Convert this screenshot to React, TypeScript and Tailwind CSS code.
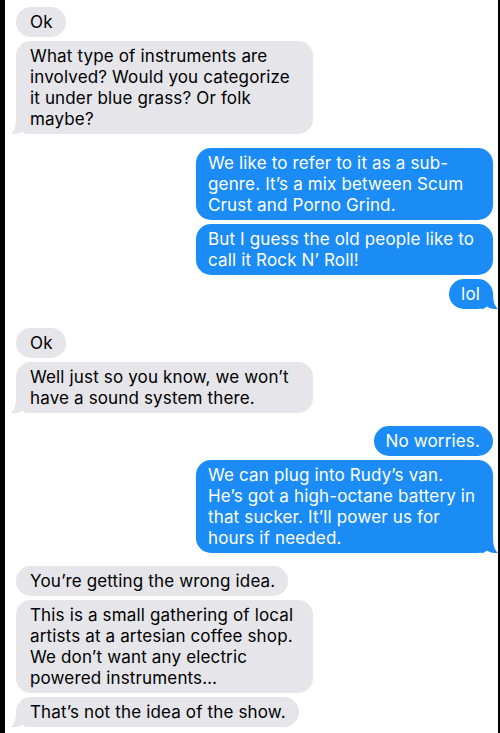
import type { ReactNode } from 'react'

type Msg = { lines: string[]; wide?: boolean }
type Group = { me: boolean; top: string; msgs: Msg[] }

const GROUPS: Group[] = [
  {
    me: false,
    top: 'mt-[7px]',
    msgs: [
      { lines: ['Ok'] },
      {
        lines: [
          'What type of instruments are',
          'involved? Would you categorize',
          'it under blue grass? Or folk',
          'maybe?',
        ],
        wide: true,
      },
    ],
  },
  {
    me: true,
    top: 'mt-[14px]',
    msgs: [
      {
        lines: ['We like to refer to it as a sub-', 'genre. It\u2019s a mix between Scum', 'Crust and Porno Grind.'],
        wide: true,
      },
      { lines: ['But I guess the old people like to', 'call it Rock N\u2019 Roll!'], wide: true },
      { lines: ['lol'] },
    ],
  },
  {
    me: false,
    top: 'mt-[19px]',
    msgs: [
      { lines: ['Ok'] },
      { lines: ['Well just so you know, we won\u2019t', 'have a sound system there.'], wide: true },
    ],
  },
  {
    me: true,
    top: 'mt-[13px]',
    msgs: [
      { lines: ['No worries.'] },
      {
        lines: [
          'We can plug into Rudy\u2019s van.',
          'He\u2019s got a high-octane battery in',
          'that sucker. It\u2019ll power us for',
          'hours if needed.',
        ],
        wide: true,
      },
    ],
  },
  {
    me: false,
    top: 'mt-[13px]',
    msgs: [
      { lines: ['You\u2019re getting the wrong idea.'] },
      {
        lines: [
          'This is a small gathering of local',
          'artists at a artesian coffee shop.',
          'We don\u2019t want any electric',
          'powered instruments\u2026',
        ],
        wide: true,
      },
      { lines: ['That\u2019s not the idea of the show.'] },
    ],
  },
]

function Tail({ me }: { me: boolean }) {
  return (
    <svg
      viewBox="0 0 17 16"
      className={`absolute bottom-0 h-[16px] w-[17px] ${
        me ? '-right-[5px] fill-[#1b8cf5]' : '-left-[5px] -scale-x-100 fill-[#e5e5ea]'
      }`}
    >
      <path d="M0 0 L12 0 C12 8 13.5 13 17 16 C12.5 16.4 8.5 15.2 6 13.4 C4 15 2 16 0 16 Z" />
    </svg>
  )
}

function Bubble({ me, msg, tail }: { me: boolean; msg: Msg; tail: boolean }) {
  const lines: ReactNode[] = []
  msg.lines.forEach((l, i) => {
    if (i) lines.push(<br key={`b${i}`} />)
    lines.push(l)
  })
  return (
    <div
      className={`relative rounded-[15px] pb-[4px] pt-[5px] text-[17px] leading-[21px] tracking-[0.15px] whitespace-nowrap ${
        msg.wide ? 'w-[297px]' : 'w-fit'
      } ${
        me
          ? 'self-end bg-[#1b8cf5] pl-[12px] pr-[13px] text-white'
          : 'self-start bg-[#e5e5ea] pl-[14px] pr-[13px] text-black'
      }`}
    >
      {tail && <Tail me={me} />}
      <span className="relative">{lines}</span>
    </div>
  )
}

export default function App() {
  return (
    <div
      className="flex h-[733px] w-[500px] bg-black"
      style={{ fontFamily: 'Inter, "Liberation Sans", Arial, sans-serif' }}
    >
      <div className="ml-[5px] mr-[2px] flex flex-1 flex-col overflow-hidden bg-white pl-[11px] pr-[5px]">
        {GROUPS.map((g, gi) => (
          <div key={gi} className={`flex flex-col gap-[4px] ${g.top}`}>
            {g.msgs.map((m, mi) => (
              <Bubble key={mi} me={g.me} msg={m} tail={mi === g.msgs.length - 1} />
            ))}
          </div>
        ))}
      </div>
    </div>
  )
}
